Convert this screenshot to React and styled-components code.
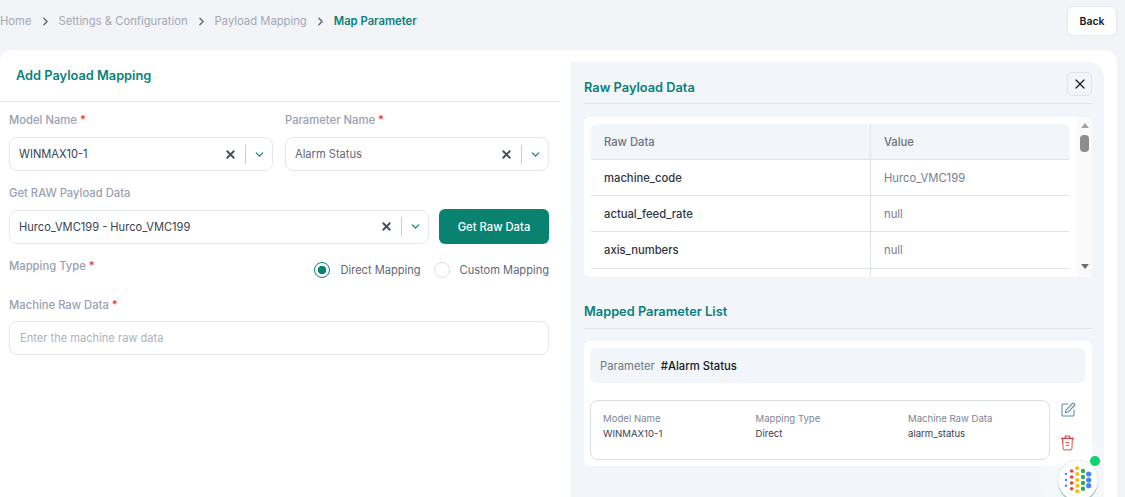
import React from "react";
import styled, { createGlobalStyle } from "styled-components";
import { ChevronRight, ChevronDown, X, SquarePen } from "lucide-react";

const GlobalStyle = createGlobalStyle`
  html, body {
    margin: 0;
    padding: 0;
    height: 100%;
    overflow: hidden;
    background: #f2f4f8;
    font-family: "Inter", "Liberation Sans", sans-serif;
  }
  * { box-sizing: border-box; }
`;

const rows = [
  ["machine_code", "Hurco_VMC199"],
  ["actual_feed_rate", "null"],
  ["axis_numbers", "null"],
];

const dotColumns = [
  { x: 8, color: "#4285f4", r: 1.2, ys: [14, 20, 25.7] },
  { x: 13.7, color: "#ea4335", r: 1.8, ys: [11, 17, 23, 28.7] },
  { x: 19.3, color: "#fbbc05", r: 2, ys: [8.3, 14, 20, 25.7, 31.3] },
  { x: 25, color: "#34a853", r: 2.2, ys: [11, 17, 23, 28.7] },
  { x: 30.7, color: "#4285f4", r: 2.6, ys: [14, 20, 25.7] },
];

function SelectBox({ value, muted }) {
  return (
    <Select>
      <SelectValue $muted={muted}>{value}</SelectValue>
      <X size={13} strokeWidth={3.4} color="#444c5c" />
      <SelectSep />
      <ChevronDown size={13} strokeWidth={2.2} color="#0a8270" />
    </Select>
  );
}

function Required({ children }) {
  return (
    <Label>
      {children} <Star>*</Star>
    </Label>
  );
}

function TrashIcon() {
  return (
    <svg width="15" height="16" viewBox="0 0 15 16" fill="none" stroke="#d2403f" strokeWidth="1.2" strokeLinecap="round" strokeLinejoin="round">
      <path d="M1.6 3.4h11.8" />
      <path d="M5.2 3.2V1.8c0-.5.3-.8.8-.8h3c.5 0 .8.3.8.8v1.4" />
      <path d="M2.6 3.4l.5 10c0 .9.6 1.4 1.4 1.4h6c.8 0 1.4-.5 1.4-1.4l.5-10" />
      <path d="M5.8 7.6h3.4M6.4 10.4h2.2" />
    </svg>
  );
}

export default function App() {
  return (
    <Page>
      <GlobalStyle />
      <TopBar>
        <Crumbs>
          <Crumb>Home</Crumb>
          <ChevronRight size={13} strokeWidth={2.4} color="#5b6472" />
          <Crumb>Settings &amp; Configuration</Crumb>
          <ChevronRight size={13} strokeWidth={2.4} color="#5b6472" />
          <Crumb>Payload Mapping</Crumb>
          <ChevronRight size={13} strokeWidth={2.4} color="#5b6472" />
          <CrumbActive>Map Parameter</CrumbActive>
        </Crumbs>
        <BackButton>Back</BackButton>
      </TopBar>

      <Card>
        <LeftCol>
          <FormTitle>Add Payload Mapping</FormTitle>
          <Form>
            <TwoCols>
              <Field>
                <Required>Model Name</Required>
                <SelectBox value="WINMAX10-1" />
              </Field>
              <Field>
                <Required>Parameter Name</Required>
                <SelectBox value="Alarm Status" muted />
              </Field>
            </TwoCols>
            <RawField>
              <Label>Get RAW Payload Data</Label>
              <RawRow>
                <SelectBox value="Hurco_VMC199 - Hurco_VMC199" />
                <PrimaryButton>Get Raw Data</PrimaryButton>
              </RawRow>
            </RawField>
            <TypeRow>
              <Required>Mapping Type</Required>
              <Radios>
                <Radio $on />
                <RadioText>Direct Mapping</RadioText>
                <Radio />
                <RadioText>Custom Mapping</RadioText>
              </Radios>
            </TypeRow>
            <InputField>
              <Required>Machine Raw Data</Required>
              <TextInput placeholder="Enter the machine raw data" />
            </InputField>
          </Form>
        </LeftCol>

        <RightPanel>
          <PanelHead>
            <PanelTitle>Raw Payload Data</PanelTitle>
            <CloseButton>
              <X size={16} strokeWidth={1.8} color="#1a1d24" />
            </CloseButton>
          </PanelHead>

          <TableCard>
            <TableClip>
              <Table>
                <thead>
                  <tr>
                    <Th>Raw Data</Th>
                    <Th>Value</Th>
                  </tr>
                </thead>
                <tbody>
                  {rows.map(([key, val]) => (
                    <tr key={key}>
                      <KeyCell>{key}</KeyCell>
                      <ValueCell>{val}</ValueCell>
                    </tr>
                  ))}
                  <tr>
                    <KeyCell />
                    <ValueCell />
                  </tr>
                </tbody>
              </Table>
            </TableClip>
            <ScrollTrack>
              <ArrowUp />
              <Thumb />
              <ScrollSpace />
              <ArrowDown />
            </ScrollTrack>
          </TableCard>

          <MappedHead>Mapped Parameter List</MappedHead>

          <ListCard>
            <ParamBar>
              <ParamLabel>Parameter</ParamLabel>
              <ParamName>#Alarm Status</ParamName>
            </ParamBar>
            <MappingRow>
              <MappingBox>
                <Col>
                  <ColHead>Model Name</ColHead>
                  <ColValue>WINMAX10-1</ColValue>
                </Col>
                <Col>
                  <ColHead>Mapping Type</ColHead>
                  <ColValue>Direct</ColValue>
                </Col>
                <Col>
                  <ColHead>Machine Raw Data</ColHead>
                  <ColValue>alarm_status</ColValue>
                </Col>
              </MappingBox>
              <Actions>
                <SquarePen size={16} strokeWidth={1.6} color="#5b8ea6" />
                <TrashIcon />
              </Actions>
            </MappingRow>
          </ListCard>
        </RightPanel>
      </Card>

      <Widget>
        <WidgetHalo />
        <WidgetBall>
          <svg width="40" height="40" viewBox="0 0 40 40">
            {dotColumns.map((c) =>
              c.ys.map((y) => <circle key={c.x + "-" + y} cx={c.x} cy={y} r={c.r} fill={c.color} />)
            )}
          </svg>
        </WidgetBall>
        <WidgetDot />
      </Widget>
    </Page>
  );
}

const Page = styled.div`
  width: 1125px;
  height: 497px;
  overflow: hidden;
  position: relative;
  background: #f2f4f8;
  color: #1f2937;
  font-size: 11.25px;
`;

const TopBar = styled.div`
  height: 50px;
  padding: 6px 8px 0 0;
  display: flex;
  justify-content: space-between;
  align-items: flex-start;
`;

const Crumbs = styled.div`
  height: 30px;
  display: flex;
  align-items: center;
  gap: 7px;
`;

const Crumb = styled.span`
  font-size: 11.25px;
  color: #a2a9b6;
`;

const CrumbActive = styled(Crumb)`
  color: #0c7f7a;
  font-weight: 600;
`;

const BackButton = styled.button`
  width: 50px;
  height: 30px;
  padding: 0;
  background: #fff;
  border: 1px solid #e6e9f0;
  border-radius: 6px;
  font: 600 10.5px "Inter", sans-serif;
  color: #15181e;
`;

const Card = styled.div`
  width: 1117px;
  height: 447px;
  background: #fff;
  border-radius: 12px 12px 0 0;
  display: flex;
`;

const LeftCol = styled.div`
  width: 571px;
  flex: none;
`;

const FormTitle = styled.div`
  width: 559px;
  height: 52px;
  padding: 17px 0 0 16px;
  border-bottom: 1px solid #e2e5ee;
  font-size: 12.8px;
  line-height: 18px;
  font-weight: 600;
  color: #0c7f7a;
`;

const Form = styled.div`
  width: 559px;
  padding: 10px 10px 0 9px;
`;

const TwoCols = styled.div`
  display: grid;
  grid-template-columns: 264px 264px;
  gap: 12px;
`;

const Field = styled.div`
  display: flex;
  flex-direction: column;
  gap: 9px;
`;

const RawField = styled(Field)`
  margin-top: 14px;
  gap: 8px;
`;

const InputField = styled(Field)`
  gap: 8px;
`;

const Label = styled.div`
  font-size: 11.25px;
  line-height: 16px;
  font-weight: 500;
  color: #9aa1b2;
`;

const Star = styled.span`
  color: #e0313d;
`;

const Select = styled.div`
  flex: 1 1 auto;
  height: 34px;
  padding: 0 6px 0 9px;
  display: flex;
  align-items: center;
  background: #fff;
  border: 1px solid #e3e7f0;
  border-radius: 8px;
`;

const SelectValue = styled.div`
  flex: 1;
  font-size: 11.1px;
  color: ${(p) => (p.$muted ? "#5f6878" : "#3a4150")};
`;

const SelectSep = styled.div`
  width: 1px;
  height: 19px;
  margin: 0 7px 0 8px;
  background: #c9ccd3;
`;

const RawRow = styled.div`
  height: 35px;
  display: flex;
  align-items: center;
  gap: 10px;
`;

const PrimaryButton = styled.button`
  flex: none;
  width: 110px;
  height: 35px;
  padding: 0;
  border: 0;
  border-radius: 6px;
  background: #0a8270;
  color: #fff;
  font: 500 11.25px "Inter", sans-serif;
`;

const TypeRow = styled.div`
  margin-top: 14px;
  height: 39px;
  display: flex;
  justify-content: space-between;
  align-items: flex-start;
`;

const Radios = styled.div`
  display: flex;
  align-items: center;
  padding-top: 4px;
`;

const Radio = styled.span`
  width: 16px;
  height: 16px;
  margin-left: ${(p) => (p.$on ? "0" : "13px")};
  margin-right: 10px;
  border-radius: 50%;
  background: ${(p) => (p.$on ? "radial-gradient(circle, #0a8270 0 4px, #fff 4.5px)" : "#fff")};
  border: 1px solid ${(p) => (p.$on ? "#0a8270" : "#dcdfe6")};
`;

const RadioText = styled.span`
  font-size: 11.1px;
  color: #5f6878;
`;

const TextInput = styled.input`
  height: 34px;
  padding: 0 10px;
  border: 1px solid #e3e7f0;
  border-radius: 8px;
  font: 400 11.1px "Inter", sans-serif;
  &::placeholder {
    color: #adb2bd;
  }
`;

const RightPanel = styled.div`
  width: 533px;
  margin-top: 12px;
  padding: 10px 12px 0 13px;
  background: #f2f5f9;
  border-radius: 0 16px 0 0;
`;

const PanelHead = styled.div`
  height: 32px;
  display: flex;
  justify-content: space-between;
  align-items: flex-start;
  border-bottom: 1px solid #e1e5ee;
`;

const PanelTitle = styled.div`
  padding-top: 8px;
  font-size: 12.8px;
  line-height: 16px;
  font-weight: 600;
  color: #0c7f7a;
`;

const CloseButton = styled.div`
  width: 25px;
  height: 24px;
  display: flex;
  align-items: center;
  justify-content: center;
  border: 1px solid #dfe3ea;
  border-radius: 5px;
`;

const TableCard = styled.div`
  height: 160px;
  margin-top: 13px;
  display: flex;
  background: #fff;
  border-radius: 6px 0 0 6px;
`;

const TableClip = styled.div`
  width: 478px;
  height: 153px;
  margin: 7px 0 0 7px;
  overflow: hidden;
`;

const Table = styled.table`
  width: 100%;
  border-collapse: separate;
  border-spacing: 0;
  table-layout: fixed;
  font-size: 11.25px;
  tbody tr:nth-child(3) td {
    height: 37px;
  }
`;

const Th = styled.th`
  height: 36px;
  padding: 0 0 0 13px;
  text-align: left;
  font-weight: 500;
  color: #6b7280;
  background: #f2f5f9;
  border-bottom: 1px solid #dfe3ec;
  &:first-child {
    width: 280px;
    border-right: 1px solid #dfe3ec;
    border-top-left-radius: 6px;
  }
  &:last-child {
    border-top-right-radius: 6px;
  }
`;

const KeyCell = styled.td`
  height: 36px;
  padding: 0 0 0 13px;
  font-weight: 500;
  color: #30363f;
  border-right: 1px solid #dfe3ec;
  border-bottom: 1px solid #dfe3ec;
`;

const ValueCell = styled.td`
  height: 36px;
  padding: 0 0 0 13px;
  color: #767e8c;
  border-bottom: 1px solid #dfe3ec;
`;

const ScrollTrack = styled.div`
  width: 15px;
  height: 160px;
  margin-left: 8px;
  padding: 6px 0 8px;
  display: flex;
  flex-direction: column;
  align-items: center;
  background: #fafafa;
`;

const ArrowUp = styled.div`
  border: 4px solid transparent;
  border-top: 0;
  border-bottom: 5px solid #a3a3a3;
`;

const Thumb = styled.div`
  width: 9px;
  height: 17px;
  margin-top: 7px;
  border-radius: 4px;
  background: #8d8d8d;
`;

const ScrollSpace = styled.div`
  flex: 1;
`;

const ArrowDown = styled.div`
  border: 4px solid transparent;
  border-bottom: 0;
  border-top: 5px solid #6f6f6f;
`;

const MappedHead = styled.div`
  height: 28px;
  margin-top: 24px;
  padding-top: 3px;
  border-bottom: 1px solid #e1e5ee;
  font-size: 12.8px;
  line-height: 16px;
  font-weight: 600;
  color: #0c7f7a;
`;

const ListCard = styled.div`
  height: 125px;
  margin-top: 12px;
  padding: 7px 7px 0 6px;
  background: #fff;
  border-radius: 6px;
`;

const ParamBar = styled.div`
  height: 35px;
  padding-left: 10px;
  display: flex;
  align-items: center;
  gap: 6px;
  background: #f2f5f9;
  border-radius: 6px;
`;

const ParamLabel = styled.span`
  font-size: 11.25px;
  color: #6f7785;
`;

const ParamName = styled.span`
  font-size: 11.25px;
  font-weight: 500;
  color: #15181e;
`;

const MappingRow = styled.div`
  margin-top: 17px;
  display: flex;
`;

const MappingBox = styled.div`
  width: 460px;
  height: 60px;
  padding: 11px 0 0 12px;
  display: grid;
  grid-template-columns: 152.5px 152.5px 1fr;
  align-items: start;
  border: 1px solid #d9dee8;
  border-radius: 8px;
`;

const Col = styled.div`
  display: flex;
  flex-direction: column;
  gap: 1px;
`;

const ColHead = styled.div`
  font-size: 9.6px;
  line-height: 14px;
  color: #7d8694;
`;

const ColValue = styled.div`
  font-size: 9.6px;
  line-height: 14px;
  color: #3a4150;
`;

const Actions = styled.div`
  margin: 2px 0 0 10px;
  display: flex;
  flex-direction: column;
  gap: 17px;
`;

const Widget = styled.div`
  position: absolute;
  left: 1040px;
  top: 440px;
  width: 76px;
  height: 76px;
`;

const WidgetHalo = styled.div`
  position: absolute;
  inset: 0;
  border-radius: 50%;
  background: rgba(255, 255, 255, 0.28);
`;

const WidgetBall = styled.div`
  position: absolute;
  left: 18px;
  top: 20px;
  width: 40px;
  height: 40px;
  border-radius: 50%;
  background: #fff;
  box-shadow: 0 2px 0 #a9cdc6, 0 0 1px #9bb;
`;

const WidgetDot = styled.div`
  position: absolute;
  left: 50px;
  top: 16px;
  width: 10px;
  height: 10px;
  border-radius: 50%;
  background: #0fd26e;
`;
